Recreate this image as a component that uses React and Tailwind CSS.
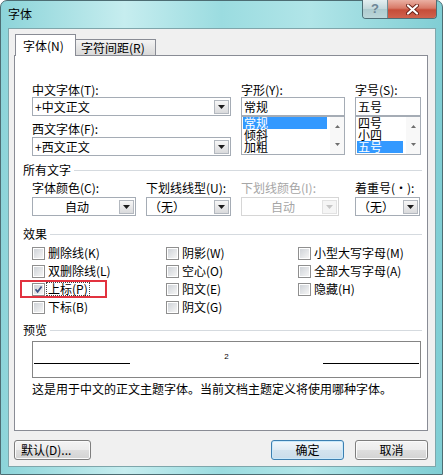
import React from 'react';

const ui = "font-['Noto_Sans_CJK_SC','Noto_Sans',sans-serif] text-[12px] leading-[14px]";

function DropArrow({ disabled }) {
  return (
    <div
      className={`mr-px flex h-[14px] w-[15px] shrink-0 items-center justify-center border ${
        disabled ? 'border-[#e2e2e2] bg-[#f5f5f5]' : 'border-[#b3b8bf] bg-[linear-gradient(#f7f7f7,#d9dadc)]'
      }`}
    >
      <svg width="7" height="4" viewBox="0 0 7 4">
        <path d="M0 0h7L3.5 4z" fill={disabled ? '#c6c6c6' : '#1c1c1c'} />
      </svg>
    </div>
  );
}

function Combo({ value, disabled, center, className = '' }) {
  return (
    <div
      className={`flex h-[19px] items-center border bg-white ${
        disabled ? 'border-[#d6d6d6] text-[#a6a6a6]' : 'border-[#a5acb5]'
      } ${className}`}
    >
      <span className={`min-w-0 flex-1 whitespace-nowrap pl-[2px] ${center ? 'text-center' : ''}`}>{value}</span>
      <DropArrow disabled={disabled} />
    </div>
  );
}

function ScrollBar() {
  return (
    <div className="flex w-[14px] shrink-0 flex-col bg-[#f8f8f8]">
      <div className="flex h-[18px] items-center justify-center">
        <svg width="5" height="3" viewBox="0 0 5 3">
          <path d="M0 3h5L2.5 0z" fill="#6e6e6e" />
        </svg>
      </div>
      <div className="flex h-[18px] items-center justify-center">
        <svg width="5" height="3" viewBox="0 0 5 3">
          <path d="M0 0h5L2.5 3z" fill="#6e6e6e" />
        </svg>
      </div>
    </div>
  );
}

function PickList({ value, items, selected }) {
  return (
    <>
      <div className="h-[19px] border border-[#a5acb5] bg-white pl-[2px] leading-[17px]">{value}</div>
      <div className="flex h-[39px] border border-[#a5acb5] bg-white">
        <div className="flex-1 pl-px pr-[3px]">
          {items.map((it) => (
            <div
              key={it}
              className={`h-[12px] pl-px leading-[12px] ${it === selected ? 'bg-[#3399ff] text-white' : ''}`}
            >
              {it}
            </div>
          ))}
        </div>
        <ScrollBar />
      </div>
    </>
  );
}

function GroupTitle({ children, className = '' }) {
  return (
    <div className={`flex h-[14px] items-center pl-[8px] pr-[5px] ${className}`}>
      <span>{children}</span>
      <div className="ml-[3px] h-px flex-1 bg-[#d5dadf]" />
    </div>
  );
}

function Check({ checked }) {
  return (
    <div className="h-[13px] w-[13px] shrink-0 border border-[#8f8f8f] bg-white p-px">
      <div className="h-full w-full bg-[linear-gradient(135deg,#cfd3d8,#f5f5f5)]">
        {checked && (
          <svg width="9" height="9" viewBox="0 0 9 9">
            <path d="M1.5 4.3L3.6 6.8L7.6 1.4" fill="none" stroke="#3d5283" strokeWidth="1.7" />
          </svg>
        )}
      </div>
    </div>
  );
}

function Effect({ label, checked, focused }) {
  return (
    <div className="flex h-[18px] items-center whitespace-nowrap">
      <Check checked={checked} />
      {focused ? (
        <span className="ml-px border border-dotted border-[#444] pl-px pr-px leading-[12px]">{label}</span>
      ) : (
        <span className="ml-[3px]">{label}</span>
      )}
    </div>
  );
}

function Button({ children, primary, className = '' }) {
  return (
    <div
      className={`flex h-[20px] items-center rounded-[3px] border ${
        primary
          ? 'border-[#3c7fb1] bg-[linear-gradient(#f2f8fc,#dfebf4_50%,#d3e3ef_51%,#c9dcea)] shadow-[inset_0_0_0_1px_#c9e9fb]'
          : 'border-[#7e7e7e] bg-[linear-gradient(#f4f4f4,#ececec_50%,#dedede_51%,#d2d2d2)] shadow-[inset_0_0_0_1px_#fbfbfb]'
      } ${className}`}
    >
      {children}
    </div>
  );
}

export default function App() {
  return (
    <div className={`${ui} h-[475px] w-[443px] overflow-hidden bg-white text-black`}>
      <div className="flex h-full flex-col rounded-t-[7px] border border-[#4d6d73] bg-[linear-gradient(90deg,#8cd4d9,#c6edef_28%,#9bdce0_50%,#b1e5e8_70%,#80ced4)] pb-[7px] pl-[7px] pr-[6px]">
        {/* caption */}
        <div className="flex h-[27px] shrink-0 items-start">
          <span className="mt-[6px]">字体</span>
          <div className="-mr-px -mt-px ml-auto flex h-[19px] overflow-hidden rounded-b-[4px] border border-t-0 border-[#4e6e76]">
            <div className="flex w-[25px] items-center justify-center border-r border-[#6e8d94] bg-[linear-gradient(#e4eff1,#c2d7da_50%,#aecbcf_51%,#bcd6d9)] font-['Liberation_Sans',sans-serif] text-[13px] font-bold text-[#6d8696]">
              ?
            </div>
            <div className="flex w-[48px] items-center justify-center bg-[linear-gradient(#eab0a3,#d87a68_45%,#c64d39_55%,#d0624d)]">
              <svg width="13" height="11" viewBox="0 0 13 11">
                <path d="M2 1.5L11 9.5M11 1.5L2 9.5" stroke="#6b2319" strokeWidth="4" strokeLinecap="round" />
                <path d="M2 1.5L11 9.5M11 1.5L2 9.5" stroke="#ffffff" strokeWidth="2.2" strokeLinecap="round" />
              </svg>
            </div>
          </div>
        </div>

        {/* client area */}
        <div className="flex flex-1 flex-col border border-[#7fa6ab] bg-[#f0f0f0] pl-[5px] pt-[5px]">
          {/* tabs */}
          <div className="flex h-[21px] items-end pl-px">
            <div className="relative z-10 -mb-px flex h-[22px] w-[61px] items-center border border-b-0 border-[#898c95] bg-white pl-[7px]">
              字体(N)
            </div>
            <div className="flex h-[16px] w-[80px] items-center border border-b-0 border-l-0 border-[#898c95] bg-[linear-gradient(#f4f4f4,#e6e6e6_50%,#d9d9d9)] pl-[5px]">
              字符间距(R)
            </div>
          </div>

          {/* tab page */}
          <div className="h-[376px] w-[414px] border border-[#898c95] bg-white pt-[27px]">
            <div className="flex pl-[17px]">
              <div className="w-[199px]">
                <div className="h-[14px]">中文字体(T):</div>
                <Combo value="+中文正文" />
                <div className="mt-[6px] h-[14px]">西文字体(F):</div>
                <Combo value="+西文正文" className="mt-px" />
              </div>
              <div className="ml-[10px] w-[104px]">
                <div className="h-[14px]">字形(Y):</div>
                <PickList value="常规" items={['常规', '倾斜', '加粗']} selected="常规" />
              </div>
              <div className="ml-[10px] w-[66px]">
                <div className="h-[14px]">字号(S):</div>
                <PickList value="五号" items={['四号', '小四', '五号']} selected="五号" />
              </div>
            </div>

            <GroupTitle className="mt-[7px]">所有文字</GroupTitle>
            <div className="mt-[4px] flex pl-[17px]">
              <div className="w-[104px]">
                <div className="h-[14px] whitespace-nowrap">字体颜色(C):</div>
                <Combo value="自动" center className="mt-[2px]" />
              </div>
              <div className="ml-[10px] w-[85px]">
                <div className="h-[14px] whitespace-nowrap">下划线线型(U):</div>
                <Combo value="（无）" className="mt-[2px]" />
              </div>
              <div className="ml-[10px] w-[98px]">
                <div className="h-[14px] whitespace-nowrap text-[#a6a6a6]">下划线颜色(I):</div>
                <Combo value="自动" center disabled className="mt-[2px]" />
              </div>
              <div className="ml-[16px] w-[65px]">
                <div className="h-[14px] whitespace-nowrap">着重号(·):</div>
                <Combo value="（无）" className="mt-[2px]" />
              </div>
            </div>

            <GroupTitle className="mt-[11px]">效果</GroupTitle>
            <div className="mt-[3px] flex pl-[17px]">
              <div className="w-[134px]">
                <Effect label="删除线(K)" />
                <Effect label="双删除线(L)" />
                <div className="relative">
                  <Effect label="上标(P)" checked focused />
                  {/* red marker box around the superscript option */}
                  <div className="absolute left-[-12px] top-0 h-[18px] w-[87px] border-2 border-[#e2323f]" />
                </div>
                <Effect label="下标(B)" />
              </div>
              <div className="w-[132px]">
                <Effect label="阴影(W)" />
                <Effect label="空心(O)" />
                <Effect label="阳文(E)" />
                <Effect label="阴文(G)" />
              </div>
              <div>
                <Effect label="小型大写字母(M)" />
                <Effect label="全部大写字母(A)" />
                <Effect label="隐藏(H)" />
              </div>
            </div>

            <GroupTitle className="mt-[7px]">预览</GroupTitle>
            <div className="ml-[17px] mt-[4px] flex h-[37px] w-[389px] items-start justify-between border border-[#858585] bg-white px-px">
              <div className="mt-[21px] h-px w-[96px] bg-black" />
              <span className="mt-[11px] font-['Liberation_Sans',sans-serif] text-[8px] leading-[8px]">2</span>
              <div className="mt-[21px] h-px w-[96px] bg-black" />
            </div>
            <div className="mt-[4px] h-[14px] whitespace-nowrap pl-[17px]">
              这是用于中文的正文主题字体。当前文档主题定义将使用哪种字体。
            </div>
          </div>

          {/* dialog buttons */}
          <div className="mt-[9px] flex w-[414px]">
            <Button className="w-[77px] pl-[6px]">默认(D)...</Button>
            <Button primary className="ml-auto w-[73px] justify-center">
              确定
            </Button>
            <Button className="ml-[11px] w-[73px] justify-center">取消</Button>
          </div>
        </div>
      </div>
    </div>
  );
}
